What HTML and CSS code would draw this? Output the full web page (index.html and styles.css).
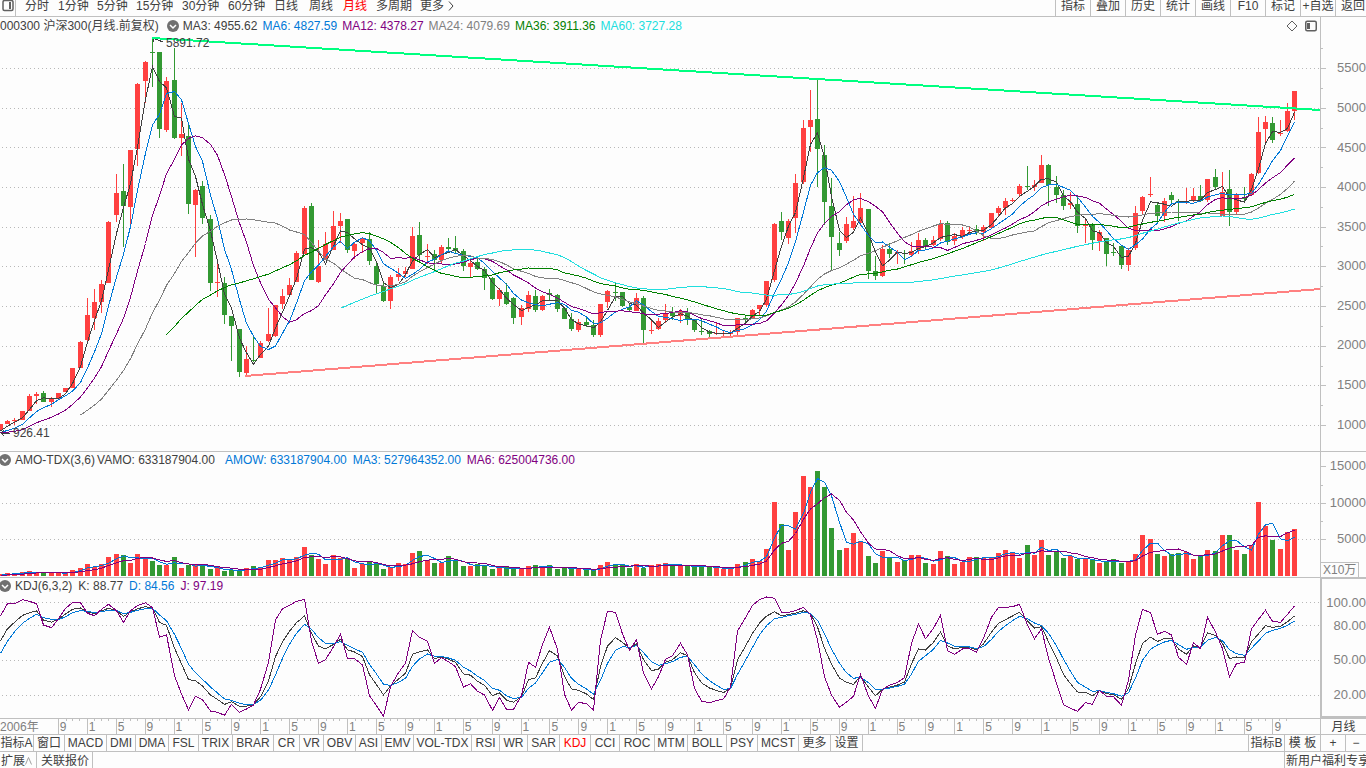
FILE: index.html
```html
<!DOCTYPE html>
<html lang="zh-CN">
<head>
<meta charset="utf-8">
<title>沪深300 月线</title>
<link rel="stylesheet" href="styles.css">
</head>
<body>
<header class="toolbar">
  <button class="side-toggle" aria-label="侧栏"><svg class="side-icon" viewBox="0 0 12 12"><rect x="1" y="0.5" width="10" height="10" rx="1.5" fill="none" stroke="#606060" stroke-width="1.5"/><rect x="7" y="2" width="2" height="7" fill="#606060"/></svg></button>
  <nav class="periods">
    <button>分时</button><button>1分钟</button><button>5分钟</button><button>15分钟</button><button>30分钟</button><button>60分钟</button><button>日线</button><button>周线</button><button class="active">月线</button><button>多周期</button><button class="more">更多<svg class="more-icon" viewBox="0 0 6 10"><path d="M1 0.5 L5 5 L1 9.5" fill="none" stroke="#404040"/></svg></button>
  </nav>
  <nav class="tools">
    <button>指标</button><button>叠加</button><button>历史</button><button>统计</button><button>画线</button><button>F10</button><button>标记</button><button>+自选</button><button>返回</button>
  </nav>
</header>

<section class="panel price">
  <div class="plot">
    <svg id="price" class="chart" viewBox="0 17 1320 434" preserveAspectRatio="none"></svg>
    <div class="legend">
      <span class="name">000300 沪深300(月线.前复权)</span>
      <svg class="drop" viewBox="0 0 12 12"><circle cx="6" cy="6" r="6" fill="#707070"/><path d="M3 5 L6 8 L9 5" fill="none" stroke="#fff" stroke-width="1.5"/></svg>
      <span>MA3: 4955.62</span><span class="blue">MA6: 4827.59</span><span class="purple">MA12: 4378.27</span><span class="gray">MA24: 4079.69</span><span class="green">MA36: 3911.36</span><span class="cyan">MA60: 3727.28</span>
      <span class="legend-tools">
        <svg class="tool-icon" viewBox="0 0 12 12"><path d="M6 1 L11 6 L6 11 L1 6 Z" fill="none" stroke="#606060"/></svg>
        <svg class="tool-icon" viewBox="0 0 12 12"><rect x="0.75" y="1.25" width="10.5" height="9.5" rx="1.5" fill="none" stroke="#606060" stroke-width="1.5"/><rect x="2" y="3" width="3" height="6" fill="#606060"/></svg>
      </span>
    </div>
    <span class="mark mark-high">5891.72</span>
    <span class="mark mark-low">926.41</span>
  </div>
  <div class="axis">
    <svg id="price-ticks" class="ticks" viewBox="0 17 6 434" preserveAspectRatio="none"></svg>
    <div class="labels price-labels"><span></span><span>5500</span><span>5000</span><span>4500</span><span>4000</span><span>3500</span><span>3000</span><span>2500</span><span>2000</span><span>1500</span><span>1000</span></div>
  </div>
</section>

<section class="panel volume">
  <div class="plot">
    <svg id="volume" class="chart" viewBox="0 452 1320 125" preserveAspectRatio="none"></svg>
    <div class="legend">
      <svg class="drop" viewBox="0 0 12 12"><circle cx="6" cy="6" r="6" fill="#707070"/><path d="M3 5 L6 8 L9 5" fill="none" stroke="#fff" stroke-width="1.5"/></svg>
      <span class="name">AMO-TDX(3,6)</span><span>VAMO: 633187904.00</span><span class="blue wide">AMOW: 633187904.00</span><span class="blue">MA3: 527964352.00</span><span class="purple">MA6: 625004736.00</span>
    </div>
  </div>
  <div class="axis">
    <svg id="volume-ticks" class="ticks" viewBox="0 452 6 125" preserveAspectRatio="none"></svg>
    <div class="labels volume-labels"><span>15000</span><span>10000</span><span>5000</span></div>
    <span class="unit">X10万</span>
  </div>
</section>

<section class="panel kdj">
  <div class="plot">
    <svg id="kdj" class="chart" viewBox="0 578 1320 140" preserveAspectRatio="none"></svg>
    <div class="legend">
      <svg class="drop" viewBox="0 0 12 12"><circle cx="6" cy="6" r="6" fill="#707070"/><path d="M3 5 L6 8 L9 5" fill="none" stroke="#fff" stroke-width="1.5"/></svg>
      <span>KDJ(6,3,2)</span><span>K: 88.77</span><span class="blue">D: 84.56</span><span class="purple">J: 97.19</span>
    </div>
  </div>
  <div class="axis framed">
    <div class="labels kdj-labels"><span></span><span>100.00</span><span>80.00</span><span>50.00</span><span>20.00</span></div>
  </div>
</section>

<section class="panel timeline">
  <div class="months" id="months"></div>
  <div class="axis period">月线</div>
</section>

<nav class="tabs">
  <div class="indicators">
    <button>指标A</button><button>窗口</button><button>MACD</button><button>DMI</button><button>DMA</button><button>FSL</button><button>TRIX</button><button>BRAR</button><button>CR</button><button>VR</button><button>OBV</button><button>ASI</button><button>EMV</button><button>VOL-TDX</button><button>RSI</button><button>WR</button><button>SAR</button><button class="active">KDJ</button><button>CCI</button><button>ROC</button><button>MTM</button><button>BOLL</button><button>PSY</button><button>MCST</button><button>更多</button><button>设置</button>
  </div>
  <div class="templates"><button>指标B</button><button>模 板</button><button>+</button><button>−</button></div>
</nav>

<footer class="bottom">
  <button>扩展<svg class="up-icon" viewBox="0 0 7 8"><path d="M0.5 7.5 L3.5 0.5 L6.5 7.5" fill="none" stroke="#a0a0a0"/></svg></button>
  <button>关联报价</button>
  <a class="promo" href="#">新用户福利专享</a>
</footer>
<script src="chart.js"></script>
</body>
</html>
```
FILE: styles.css
```css
* { box-sizing: border-box; }

body {
  margin: 0;
  min-height: 100vh;
  height: 100vh;
  display: grid;
  grid-template-rows: 17px minmax(0, 435fr) minmax(0, 126fr) minmax(0, 141fr) 16px 17px 16px;
  overflow: hidden;
  background: #fdfdfd;
  color: #404040;
  font: 12px/14px "Liberation Sans", "Noto Sans CJK SC", sans-serif;
}

button {
  margin: 0;
  padding: 0;
  border: 0;
  background: none;
  color: inherit;
  font: inherit;
  white-space: nowrap;
}

svg { display: block; }

.active { color: #ff0000; }
.blue { color: #0078d7; }
.purple { color: #800080; }
.gray { color: #808080; }
.green { color: #008000; }
.cyan { color: #20dede; }

/* top toolbar */
.toolbar {
  display: flex;
  border-bottom: 1px solid #c0c0c0;
  line-height: 13px;
  overflow: hidden;
}
.toolbar button { display: flex; align-items: flex-start; }
.side-toggle {
  width: 16px;
  padding-left: 2px;
  border-right: 1px solid #c0c0c0;
}
.side-icon { width: 12px; height: 12px; }
.periods {
  display: grid;
  grid-template-columns: 33px 39px 39px 46px 46px 46px 35px 34px 33px 44px 40px;
  padding-left: 9px;
}
.more { gap: 4px; }
.more-icon { width: 6px; height: 10px; margin-top: 1px; }
.tools { display: flex; margin-left: auto; }
.tools button {
  width: 35px;
  justify-content: center;
  border-left: 1px solid #c0c0c0;
}
.tools button:last-child {
  width: 31px;
  justify-content: flex-start;
  padding-left: 5px;
}

/* chart panels */
.panel {
  display: grid;
  grid-template-columns: minmax(0, 1fr) 46px;
  min-height: 0;
  border-bottom: 1px solid #c0c0c0;
}
.plot { position: relative; min-height: 0; overflow: hidden; }
.chart { width: 100%; height: 100%; }
.chart * { vector-effect: non-scaling-stroke; shape-rendering: crispEdges; }
.chart .line, .chart .grid, .chart .trend { fill: none; }
.grid { stroke: #b8b8b8; stroke-dasharray: 1 3; }
.up { fill: #ff4040; }
.down { fill: #339933; }
.line.black { stroke: #404040; }
.line.blue { stroke: #0078d7; }
.line.purple { stroke: #800080; }
.line.gray { stroke: #808080; }
.line.green { stroke: #008000; }
.line.cyan { stroke: #20dede; }
.trend { stroke-width: 2; }
.resistance { stroke: #00ff80; }
.support { stroke: #ff8080; }

.legend {
  position: absolute;
  top: 1px;
  left: 0;
  right: 3px;
  display: flex;
  align-items: center;
  gap: 5px;
  height: 16px;
  white-space: nowrap;
}
.price .name { margin-right: 3px; }
.price .drop { margin-right: -1px; }
.volume .legend, .kdj .legend { top: 0; gap: 6px; }
.volume .name { margin-right: -4px; }
.legend .drop { width: 12px; height: 12px; flex: none; }
.volume .drop, .kdj .drop { margin: 0 -2px 0 -1px; }
.legend .wide { margin-left: 4px; }
.legend-tools { display: flex; gap: 7px; margin-left: auto; }
.tool-icon { width: 12px; height: 12px; }

.mark { position: absolute; }
.mark-high { left: 166px; top: 19px; }
.mark-low { left: 13px; bottom: 11px; }

.axis {
  position: relative;
  display: flex;
  min-height: 0;
  border-left: 1px solid #c0c0c0;
  color: #808080;
  font-size: 13px;
  overflow: hidden;
}
.ticks { width: 6px; height: 100%; flex: none; stroke: #c0c0c0; shape-rendering: crispEdges; }
.labels {
  flex: 1;
  display: grid;
  justify-items: end;
  align-items: center;
  min-height: 0;
}
.labels span { line-height: 14px; }
.price-labels { grid-template-rows: 95fr repeat(10, 119fr) 20fr; }
.volume-labels { grid-template-rows: 29fr 44fr 29fr 24fr; }
.kdj-labels { grid-template-rows: 12fr 23fr 23fr 46fr 24fr 9fr; }
.framed { border: 2px solid #c0c0c0; border-width: 1px 0 2px 2px; }
.unit {
  position: absolute;
  left: 0;
  bottom: 0;
  padding: 0 2px;
  border: 1px solid #c0c0c0;
  border-width: 1px 1px 0 0;
  font-size: 12px;
}

/* month axis: eight months, then four per cell, then the remainder */
.months {
  display: grid;
  grid-template-columns: minmax(0, 800fr) repeat(42, minmax(0, 400fr)) minmax(0, 657fr);
  color: #808080;
  overflow: hidden;
}
.month {
  padding-left: 1px;
  border-left: 1px solid #c0c0c0;
  background:
    linear-gradient(#c0c0c0, #c0c0c0) 25% 0 / 1px 2px no-repeat,
    linear-gradient(#c0c0c0, #c0c0c0) 50% 0 / 1px 2px no-repeat,
    linear-gradient(#c0c0c0, #c0c0c0) 75% 0 / 1px 2px no-repeat;
  line-height: 16px;
}
.month:first-child { padding-left: 0; border-left: 0; background: none; }
.month:last-child {
  background:
    linear-gradient(#c0c0c0, #c0c0c0) 6px 0 / 1px 2px no-repeat,
    linear-gradient(#c0c0c0, #c0c0c0) 13px 0 / 1px 2px no-repeat;
}
.period { align-items: center; justify-content: center; color: #404040; font-size: 12px; }

/* indicator tabs */
.tabs {
  display: flex;
  justify-content: space-between;
  border-bottom: 1px solid #c0c0c0;
}
.tabs button { border-right: 1px solid #c0c0c0; line-height: 16px; overflow: hidden; }
.indicators {
  display: grid;
  grid-template-columns: 34px 31px 42px 29px 33px 30px 34px 41px 26px 24px 32px 26px 32px 58px 28px 28px 32px 31px 29px 35px 33px 39px 31px 41px 32px 32px;
}
.templates {
  display: grid;
  grid-template-columns: 36px 36px 25px 20px;
  border-left: 1px solid #c0c0c0;
}
.templates button:last-child { border-right: 0; }

/* bottom bar */
.bottom { display: flex; line-height: 18px; overflow: hidden; }
.bottom button {
  display: flex;
  align-items: flex-start;
  padding: 0 3px 0 4px;
  border-right: 1px solid #c0c0c0;
  line-height: 18px;
}
.bottom button:first-child { padding: 0 4px 0 1px; }
.up-icon { width: 7px; height: 8px; margin-top: 5px; }
.promo {
  width: 82px;
  margin-left: auto;
  padding-left: 1px;
  border-left: 1px solid #c0c0c0;
  color: inherit;
  text-decoration: none;
  white-space: nowrap;
  overflow: hidden;
}
```
FILE: chart.js
```javascript
// One candle per month from January 2006: high, body top, body bottom, low, direction.
const candles = `
424 424 430 430 r,420 421 424 424 r,418 420 421 425 r,411 411 420 420 r,394 396 411 411 r,392 394 396 404 r,
391 393 402 402 g,397 399 402 407 r,393 393 399 399 r,388 388 392 392 r,368 368 388 388 r,341 342 368 368 r,
298 315 340 344 r,289 302 318 330 r,280 284 302 313 r,221 222 283 283 r,174 193 215 222 r,164 191 206 247 g,
150 150 207 229 r,83 84 149 166 r,61 62 81 103 r,38 52 53 87 g,52 52 129 138 g,77 81 130 132 r,
48 80 138 139 g,103 134 138 156 r,122 136 204 214 g,189 190 205 257 r,181 186 218 224 g,215 219 283 291 g,
264 282 283 297 r,277 283 315 324 g,316 316 326 361 g,329 329 372 377 g,346 359 373 375 r,336 360 361 362 g,
341 343 358 358 r,308 334 341 342 r,305 305 336 337 r,289 296 304 309 r,278 285 295 295 r,251 253 282 282 r,
206 208 254 254 r,203 206 280 280 g,240 266 282 283 r,232 244 260 260 r,211 226 250 250 r,213 221 226 243 r,
219 219 250 253 g,243 244 251 259 r,237 239 243 253 r,232 239 261 265 g,262 266 284 294 g,283 286 301 302 g,
275 277 301 309 r,268 274 277 281 r,267 271 274 277 r,227 236 269 269 r,222 235 255 261 g,244 256 257 264 r,
250 254 260 271 g,245 247 260 264 r,238 247 249 251 g,236 248 251 253 g,249 251 266 271 g,261 263 267 277 r,
256 262 269 270 g,267 269 278 290 g,277 278 299 300 g,288 290 299 306 r,283 292 304 305 g,297 298 318 324 g,
305 308 317 325 r,291 295 309 312 r,290 296 310 312 g,295 296 310 311 r,289 293 295 300 g,294 295 309 312 g,
308 308 319 319 g,313 319 329 331 g,319 322 330 332 r,318 322 325 327 g,320 325 335 337 g,304 304 335 337 r,
290 291 302 308 r,282 292 293 301 g,292 292 306 307 g,303 307 310 312 g,293 298 311 311 r,296 298 330 343 g,
320 330 331 334 r,318 321 329 330 r,304 313 320 323 r,307 312 316 320 g,309 311 316 323 r,308 312 320 325 g,
320 320 330 332 g,319 331 332 335 g,330 331 334 337 g,323 333 334 335 r,330 333 334 336 r,330 332 334 336 r,
318 318 332 335 r,315 318 319 322 g,309 310 318 318 r,305 305 309 316 r,281 281 305 307 r,223 224 280 282 r,
212 221 232 240 g,219 221 238 244 r,174 183 218 233 r,120 128 182 184 r,90 120 127 152 r,79 119 149 187 g,
145 155 202 225 g,178 206 237 271 g,232 243 250 256 g,217 224 241 243 r,196 221 228 230 r,193 208 223 226 r,
209 209 271 279 g,256 271 276 280 g,245 249 276 277 r,243 249 254 258 g,250 252 253 264 r,250 253 254 264 g,
242 251 255 257 r,233 240 250 254 r,238 240 247 250 g,236 240 245 246 r,220 224 239 241 r,221 223 242 245 g,
233 236 241 245 r,227 230 236 239 r,227 230 231 234 r,225 229 232 235 g,225 227 232 241 r,213 213 228 228 r,
206 208 213 217 r,198 201 208 215 r,198 200 201 202 r,184 186 194 196 r,166 186 187 190 g,180 185 187 191 r,
155 165 183 183 r,164 165 185 206 g,176 187 195 203 g,190 195 206 210 g,192 203 205 209 r,196 204 226 233 g,
218 225 226 243 r,223 225 240 250 g,230 232 241 251 r,238 238 254 266 g,243 252 253 256 g,246 246 265 269 g,
248 250 265 271 r,206 213 248 250 r,196 197 211 214 r,177 194 195 197 r,203 205 216 222 g,198 201 216 222 r,
192 195 200 205 g,199 201 202 221 g,188 202 203 204 r,188 196 201 202 r,185 196 201 202 g,179 179 200 202 r,
169 177 187 190 g,172 192 216 216 r,170 189 212 226 g,193 194 212 214 r,187 197 199 203 g,173 174 195 195 r,
117 132 173 174 r,116 122 129 142 r,117 123 140 143 g,120 133 134 136 r,103 111 131 132 r,91 91 111 120 r
`.trim().split(",").map(row => {
  const f = row.trim().split(" ");
  return { high: +f[0], top: +f[1], bottom: +f[2], low: +f[3], up: f[4] === "r" };
});

// Closes of 2005, used only to seed the moving averages.
const earlier = [429, 425, 430, 431, 437, 435, 435, 432, 433, 435, 435, 432];

const volumes = [
  2,3,3,4,5,4,4,4,3,3,6,8,12,9,12,19,22,21,13,22,18,15,11,11,19,8,11,12,11,7,9,5,6,6,8,10,
  8,16,16,18,16,19,29,21,17,12,21,18,18,8,12,15,12,7,9,13,12,23,25,16,13,13,20,16,10,10,12,11,7,9,9,7,
  7,10,11,8,11,7,9,8,7,6,6,11,14,11,12,8,12,8,11,12,13,11,11,10,10,10,9,9,7,8,12,14,17,15,27,74,
  52,26,64,100,89,105,89,48,26,28,43,35,20,13,25,18,14,16,21,21,13,12,25,20,12,14,19,19,18,19,23,26,23,18,31,21,
  36,21,25,18,20,17,18,16,13,15,17,13,15,22,41,37,22,20,22,23,24,17,20,26,25,41,41,26,22,31,74,50,36,27,44,47
];

// J and D are kept in thirds of a chart unit, measured from y = 450.
const jLine = [
  497,461,461,449,454,461,525,533,506,475,458,458,490,497,478,463,482,517,482,467,458,473,562,554,677,732,780,739,749,783,787,796,763,787,777,765,
  718,637,510,476,466,454,448,574,640,629,590,553,625,626,645,737,767,799,710,668,640,541,562,574,640,623,635,650,711,701,724,735,781,743,778,778,
  737,637,652,583,532,598,733,781,757,761,780,570,484,487,552,601,569,670,716,680,628,617,580,614,715,753,758,752,747,711,543,503,466,449,441,445,
  487,487,482,472,494,570,680,735,772,756,739,673,739,775,718,706,697,683,580,522,566,535,496,602,613,597,596,607,565,502,472,472,470,463,525,566,
  537,625,700,764,775,784,758,763,721,739,740,766,690,556,478,488,553,544,555,622,643,578,596,502,546,596,680,641,637,537,508,481,514,517,493,468
];
const dLine = [
  610,574,545,520,505,493,503,508,509,500,488,482,484,488,485,481,481,491,487,481,476,475,495,512,553,596,643,668,688,711,729,747,751,760,764,763,
  751,720,675,625,583,550,523,538,563,580,580,575,586,596,607,643,672,703,706,697,685,649,627,612,619,619,624,631,652,663,679,691,715,721,737,746,
  742,715,699,668,637,628,652,685,703,717,733,691,640,601,590,592,587,608,635,646,641,635,622,619,644,671,692,706,718,716,673,631,592,555,527,506,
  502,497,493,487,490,511,552,597,640,668,685,682,698,718,718,714,709,703,672,634,617,598,571,579,589,590,591,596,590,568,544,527,512,499,506,519,
  527,550,587,628,664,697,712,724,722,727,731,739,728,684,631,598,585,576,571,584,598,592,591,571,562,572,599,611,616,595,573,550,541,535,526,513
];

const xOf = i => Math.round(i * 7.23);

function add(svg, name, attrs) {
  const node = document.createElementNS("http://www.w3.org/2000/svg", name);
  for (const key in attrs) node.setAttribute(key, attrs[key]);
  svg.appendChild(node);
}

function grid(svg, rows) {
  rows.forEach(y => add(svg, "path", { class: "grid", d: `M2 ${y + 0.5}H1320` }));
}

function line(svg, color, ys, start) {
  const points = ys.map((y, i) => `${xOf(i + (start || 0)) + 0.5},${(y + 0.5).toFixed(1)}`);
  add(svg, "polyline", { class: "line " + color, points: points.join(" ") });
}

function average(values, seed, n) {
  const all = seed.concat(values);
  const out = [];
  const first = Math.max(0, n - 1 - seed.length);
  for (let i = first; i < values.length; i++) {
    const end = i + seed.length + 1;
    out.push(all.slice(end - n, end).reduce((a, b) => a + b, 0) / n);
  }
  return { out, first };
}

// Price
const price = document.getElementById("price");
grid(price, [68, 108, 147, 187, 227, 266, 306, 346, 385, 425]);
candles.forEach((c, i) => {
  const cls = c.up ? "up" : "down";
  const x = xOf(i);
  add(price, "rect", { class: cls, x: x, y: c.high, width: 1, height: c.low - c.high });
  add(price, "rect", { class: cls, x: x - 2, y: c.top, width: 5, height: c.bottom - c.top });
});
const closes = candles.map(c => c.bottom - c.top === 1 ? c.top : c.up ? c.top : c.bottom);
[[3, "black"], [6, "blue"], [12, "purple"], [24, "gray"], [36, "green"], [60, "cyan"]].forEach(([n, color]) => {
  const ma = average(closes, earlier, n);
  line(price, color, ma.out, ma.first);
});
add(price, "path", { class: "line black", d: "M163 42L153 38M153 42V38H158M10 433H1M4 430L1 433L4 436" });
add(price, "path", { class: "trend resistance", d: "M152 38L1320 110" });
add(price, "path", { class: "trend support", d: "M245 376L1320 289" });

// Turnover
const volume = document.getElementById("volume");
grid(volume, [503, 539]);
volumes.forEach((v, i) => {
  add(volume, "rect", { class: candles[i].up ? "up" : "down", x: xOf(i) - 2, y: 576 - v, width: 5, height: v });
});
[[3, "blue"], [6, "purple"]].forEach(([n, color]) => {
  const ma = average(volumes, [1, 1, 1, 1, 1], n);
  line(volume, color, ma.out.map(v => 576 - v), ma.first);
});

// KDJ
const kdj = document.getElementById("kdj");
grid(kdj, [602, 625, 660, 695]);
const toY = v => 449.5 + v / 3;
line(kdj, "black", jLine.map((j, i) => toY((j + 2 * dLine[i]) / 3)));
line(kdj, "blue", dLine.map(toY));
line(kdj, "purple", jLine.map(toY));

// Axis ticks
function ticks(id, major, minor) {
  const svg = document.getElementById(id);
  major.forEach(y => add(svg, "path", { d: `M0 ${y + 0.5}H5` }));
  minor.forEach(y => add(svg, "path", { d: `M0 ${y + 0.5}H2` }));
}
ticks("price-ticks", [68, 108, 147, 187, 227, 266, 306, 346, 385, 425], [48, 88, 128, 167, 207, 246, 286, 326, 366, 405]);
ticks("volume-ticks", [466, 503, 539], [485, 521]);

// Month labels
const months = document.getElementById("months");
function month(text) {
  const cell = document.createElement("span");
  cell.className = "month";
  cell.textContent = text;
  months.appendChild(cell);
}
month("2006年");
for (let i = 8; i <= 176; i += 4) month(String(i % 12 + 1));
```
